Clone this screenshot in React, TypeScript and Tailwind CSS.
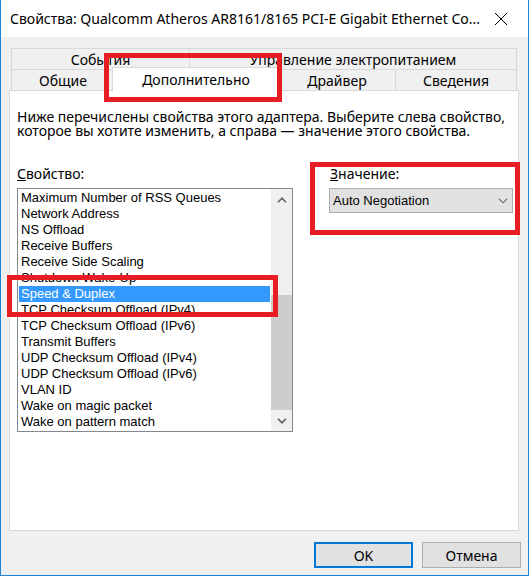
import React from "react";

const items = [
  "Maximum Number of RSS Queues",
  "Network Address",
  "NS Offload",
  "Receive Buffers",
  "Receive Side Scaling",
  "Shutdown Wake-Up",
  "Speed & Duplex",
  "TCP Checksum Offload (IPv4)",
  "TCP Checksum Offload (IPv6)",
  "Transmit Buffers",
  "UDP Checksum Offload (IPv4)",
  "UDP Checksum Offload (IPv6)",
  "VLAN ID",
  "Wake on magic packet",
  "Wake on pattern match",
];

function Chevron({ up, color = "#606060", w = 1.6 }: { up?: boolean; color?: string; w?: number }) {
  return (
    <svg width="10" height="6" viewBox="0 0 10 6">
      <path
        d={up ? "M1 5.2 L5 1.2 L9 5.2" : "M1 0.8 L5 4.8 L9 0.8"}
        fill="none"
        stroke={color}
        strokeWidth={w}
      />
    </svg>
  );
}

export default function App() {
  return (
    <div className="relative w-[530px] h-[585px] bg-white font-['Noto_Sans',sans-serif] text-black">
      <div className="w-[529px] h-[576px] border-x border-b border-[#1883d7] flex flex-col">
        {/* Title bar */}
        <div className="h-[37px] bg-white flex items-center pl-[9px] pr-[20px] justify-between">
          <span className="text-[14px] leading-[20px] whitespace-nowrap">
            Свойства: Qualcomm Atheros AR8161/8165 PCI-E Gigabit Ethernet Co...
          </span>
          <svg width="14" height="14" viewBox="0 0 14 14" className="shrink-0">
            <path d="M1 1 L13 13 M13 1 L1 13" stroke="#000" strokeWidth="1" fill="none" />
          </svg>
        </div>

        {/* Body */}
        <div className="flex-1 bg-[#f0f0f0] pt-[11px] flex flex-col">
          {/* Tabs back row */}
          <div className="ml-[10px] flex text-[14px]">
            <div className="w-[178px] h-[21px] border-t border-l border-[#d9d9d9] flex items-center justify-center">
              События
            </div>
            <div className="w-[328px] h-[21px] border-t border-l border-r border-[#d9d9d9] flex items-center justify-center">
              Управление электропитанием
            </div>
          </div>
          {/* Tabs front row */}
          <div className="ml-[10px] flex text-[14px]">
            <div className="w-[103px] h-[21px] border-t border-l border-[#d9d9d9] flex items-center justify-center">
              Общие
            </div>
            <div className="relative z-10 w-[168px] h-[24px] -ml-[2px] -mr-[2px] -mt-[2px] -mb-[1px] bg-white border-t border-l border-r border-[#d9d9d9] flex items-center justify-center pb-[1px]">
              Дополнительно
            </div>
            <div className="w-[117px] h-[21px] border-t border-l border-[#d9d9d9] flex items-center justify-center">
              Драйвер
            </div>
            <div className="w-[122px] h-[21px] border-t border-l border-r border-[#d9d9d9] flex items-center justify-center">
              Сведения
            </div>
          </div>

          {/* Panel */}
          <div className="ml-[8px] w-[510px] h-[441px] bg-white border border-[#d9d9d9] pl-[7px] pt-[19px]">
            <div className="text-[14px] leading-[14px]">
              <div>Ниже перечислены свойства этого адаптера. Выберите слева свойство,</div>
              <div>которое вы хотите изменить, а справа — значение этого свойства.</div>
            </div>

            <div className="mt-[28px] flex">
              {/* Left column */}
              <div className="w-[276px]">
                <div className="h-[16px] leading-[16px] text-[14px] mb-[6px]">
                  <span className="underline">С</span>войство:
                </div>
                <div className="h-[244px] border border-[#828790] bg-white flex">
                  <div className="flex-1 pt-[1px] font-['Liberation_Sans',Arial,sans-serif] text-[13px]">
                    {items.map((it) => {
                      const sel = it === "Speed & Duplex";
                      return (
                        <div
                          key={it}
                          className={
                            sel
                              ? "h-[16px] leading-[16px] mx-[1px] pl-[2px] bg-[#3399ff] text-white whitespace-nowrap"
                              : "h-[16px] leading-[16px] mx-[1px] pl-[2px] whitespace-nowrap"
                          }
                        >
                          {it}
                        </div>
                      );
                    })}
                  </div>
                  <div className="w-[21px] bg-[#f0f0f0] flex flex-col">
                    <div className="h-[21px] flex items-center justify-center">
                      <Chevron up />
                    </div>
                    <div className="flex-1 flex flex-col">
                      <div className="h-[85px]" />
                      <div className="h-[115px] bg-[#cdcdcd]" />
                    </div>
                    <div className="h-[21px] flex items-center justify-center">
                      <Chevron />
                    </div>
                  </div>
                </div>
              </div>

              {/* Right column */}
              <div className="ml-[36px] w-[184px]">
                <div className="h-[16px] leading-[16px] text-[14px] mb-[6px] pl-[1px]">
                  <span className="underline">З</span>начение:
                </div>
                <div className="h-[25px] bg-[#e1e1e1] border border-[#adadad] flex items-center justify-between pl-[3px] pr-[4px] font-['Liberation_Sans',Arial,sans-serif] text-[13px]">
                  <span>Auto Negotiation</span>
                  <Chevron color="#333333" w={1} />
                </div>
              </div>
            </div>
          </div>

          {/* Buttons */}
          <div className="mt-[11px] flex justify-end pr-[7px] gap-[9px] text-[14px]">
            <div className="w-[99px] h-[26px] bg-[#e1e1e1] border-2 border-[#0078d7] flex items-center justify-center">
              OK
            </div>
            <div className="w-[99px] h-[26px] bg-[#e1e1e1] border border-[#adadad] flex items-center justify-center">
              Отмена
            </div>
          </div>
        </div>
      </div>

      {/* Red annotation boxes */}
      <div className="absolute left-[104px] top-[53px] w-[178px] h-[49px] border-[5px] border-[#e81c24] z-20" />
      <div className="absolute left-[7px] top-[275px] w-[271px] h-[42px] border-[5px] border-[#e81c24] z-20" />
      <div className="absolute left-[310px] top-[162px] w-[210px] h-[73px] border-[5px] border-[#e81c24] z-20" />
    </div>
  );
}
